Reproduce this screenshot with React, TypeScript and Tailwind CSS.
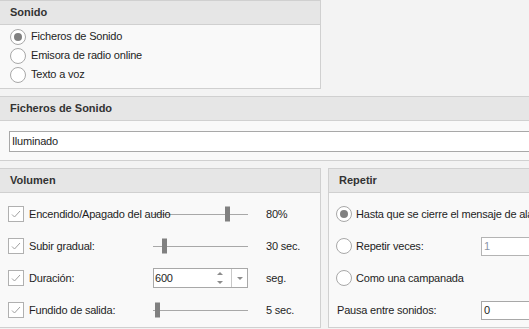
import React from "react";

const B = "border-[#d0d0d0]";

function Radio({ checked }: { checked?: boolean }) {
  return (
    <span className="w-[16px] h-[16px] shrink-0 rounded-full border border-[#a8a8a8] bg-white flex items-center justify-center">
      {checked && <span className="w-[8px] h-[8px] rounded-full bg-[#808080]" />}
    </span>
  );
}

function Check() {
  return (
    <span className="w-[16px] h-[16px] shrink-0 border border-[#b0b0b0] bg-white flex items-center justify-center">
      <svg width="12" height="12" viewBox="0 0 12 12">
        <path d="M2 6.5 L4.5 9 L10 3" fill="none" stroke="#a0a0a0" strokeWidth="1" />
      </svg>
    </span>
  );
}

function Slider({ pos }: { pos: number }) {
  return (
    <div className="relative h-full w-full">
      <div className="absolute left-0 right-0 top-1/2 h-px bg-[#a8a8a8]" />
      <div
        className="absolute top-1/2 -translate-y-1/2 w-[5px] h-[15px] bg-[#808080]"
        style={{ left: pos }}
      />
    </div>
  );
}

function Header({ children }: { children: React.ReactNode }) {
  return (
    <div className={`h-[24px] border-b ${B} bg-[#e6e6e6] flex items-center pl-[10px] font-bold text-[#333] tracking-normal`}>
      {children}
    </div>
  );
}

export default function App() {
  return (
    <div className="w-[529px] h-[329px] overflow-hidden bg-[#f3f3f3] text-[11px] text-[#1e1e1e] tracking-[-0.2px] font-['Liberation_Sans',Arial,sans-serif] leading-none">
      <div className="-ml-px w-[640px] flex flex-col">
        {/* Sonido */}
        <div className={`w-[322px] h-[89px] border ${B} bg-[#f9f9f9]`}>
          <Header>Sonido</Header>
          <div className="pt-[2px] pl-[10px] flex flex-col">
            {[
              ["Ficheros de Sonido", true],
              ["Emisora de radio online", false],
              ["Texto a voz", false],
            ].map(([t, c]) => (
              <div key={t as string} className="h-[19px] flex items-center gap-[5px]">
                <Radio checked={c as boolean} />
                <span>{t as string}</span>
              </div>
            ))}
          </div>
        </div>

        {/* Ficheros de Sonido */}
        <div className={`mt-[7px] h-[65px] border ${B} bg-[#f9f9f9]`}>
          <Header>Ficheros de Sonido</Header>
          <div className="pt-[10px] pl-[9px]">
            <div className="h-[21px] border border-[#a8a8a8] bg-white flex items-center pl-[2px]">
              Iluminado
            </div>
          </div>
        </div>

        {/* Bottom row */}
        <div className="mt-[7px] flex">
          <div className={`w-[322px] h-[160px] border ${B} bg-[#f9f9f9]`}>
            <Header>Volumen</Header>
            <div className="pt-[5px] pl-[8px] grid grid-cols-[145px_95px_18px_auto] auto-rows-[32px]">
              {/* row 1 */}
              <div className="flex items-center gap-[5px] whitespace-nowrap relative z-10">
                <Check />
                <span>Encendido/Apagado del audio</span>
              </div>
              <Slider pos={72} />
              <div />
              <div className="flex items-center">80%</div>
              {/* row 2 */}
              <div className="flex items-center gap-[5px] whitespace-nowrap">
                <Check />
                <span>Subir gradual:</span>
              </div>
              <Slider pos={9} />
              <div />
              <div className="flex items-center">30 sec.</div>
              {/* row 3 */}
              <div className="flex items-center gap-[5px] whitespace-nowrap">
                <Check />
                <span>Duración:</span>
              </div>
              <div className="flex items-center">
                <div className="w-[95px] h-[20px] border border-[#a8a8a8] bg-white flex">
                  <div className="flex-1 flex items-center pl-[1px]">600</div>
                  <div className="w-[6px] mr-[8px] flex flex-col items-center justify-center gap-[6px]">
                    <svg width="6" height="3" viewBox="0 0 6 3">
                      <path d="M0 3 L3 0 L6 3 Z" fill="#8c8c8c" />
                    </svg>
                    <svg width="6" height="3" viewBox="0 0 6 3">
                      <path d="M0 0 L6 0 L3 3 Z" fill="#8c8c8c" />
                    </svg>
                  </div>
                  <div className="w-[16px] border-l border-[#c8c8c8] flex items-center justify-center">
                    <svg width="6" height="3" viewBox="0 0 6 3">
                      <path d="M0 0 L6 0 L3 3 Z" fill="#8c8c8c" />
                    </svg>
                  </div>
                </div>
              </div>
              <div />
              <div className="flex items-center">seg.</div>
              {/* row 4 */}
              <div className="flex items-center gap-[5px] whitespace-nowrap">
                <Check />
                <span>Fundido de salida:</span>
              </div>
              <Slider pos={2} />
              <div />
              <div className="flex items-center">5 sec.</div>
            </div>
          </div>

          <div className={`ml-[7px] w-[300px] h-[160px] border ${B} bg-[#f9f9f9]`}>
            <Header>Repetir</Header>
            <div className="pt-[5px] pl-[7px] grid grid-cols-[145px_auto] auto-rows-[32px]">
              <div className="col-span-2 flex items-center gap-[4px] whitespace-nowrap">
                <Radio checked />
                <span>Hasta que se cierre el mensaje de alarma</span>
              </div>
              <div className="flex items-center gap-[4px] whitespace-nowrap">
                <Radio />
                <span>Repetir veces:</span>
              </div>
              <div className="flex items-center">
                <div className="w-[200px] h-[19px] border border-[#b4b4b4] bg-white flex items-center pl-[2px] text-[#8a96a6]">
                  1
                </div>
              </div>
              <div className="col-span-2 flex items-center gap-[4px] whitespace-nowrap">
                <Radio />
                <span>Como una campanada</span>
              </div>
              <div className="flex items-center pl-[1px] whitespace-nowrap">Pausa entre sonidos:</div>
              <div className="flex items-center">
                <div className="w-[200px] h-[19px] border border-[#a8a8a8] bg-white flex items-center pl-[2px]">
                  0
                </div>
              </div>
            </div>
          </div>
        </div>
      </div>
    </div>
  );
}
